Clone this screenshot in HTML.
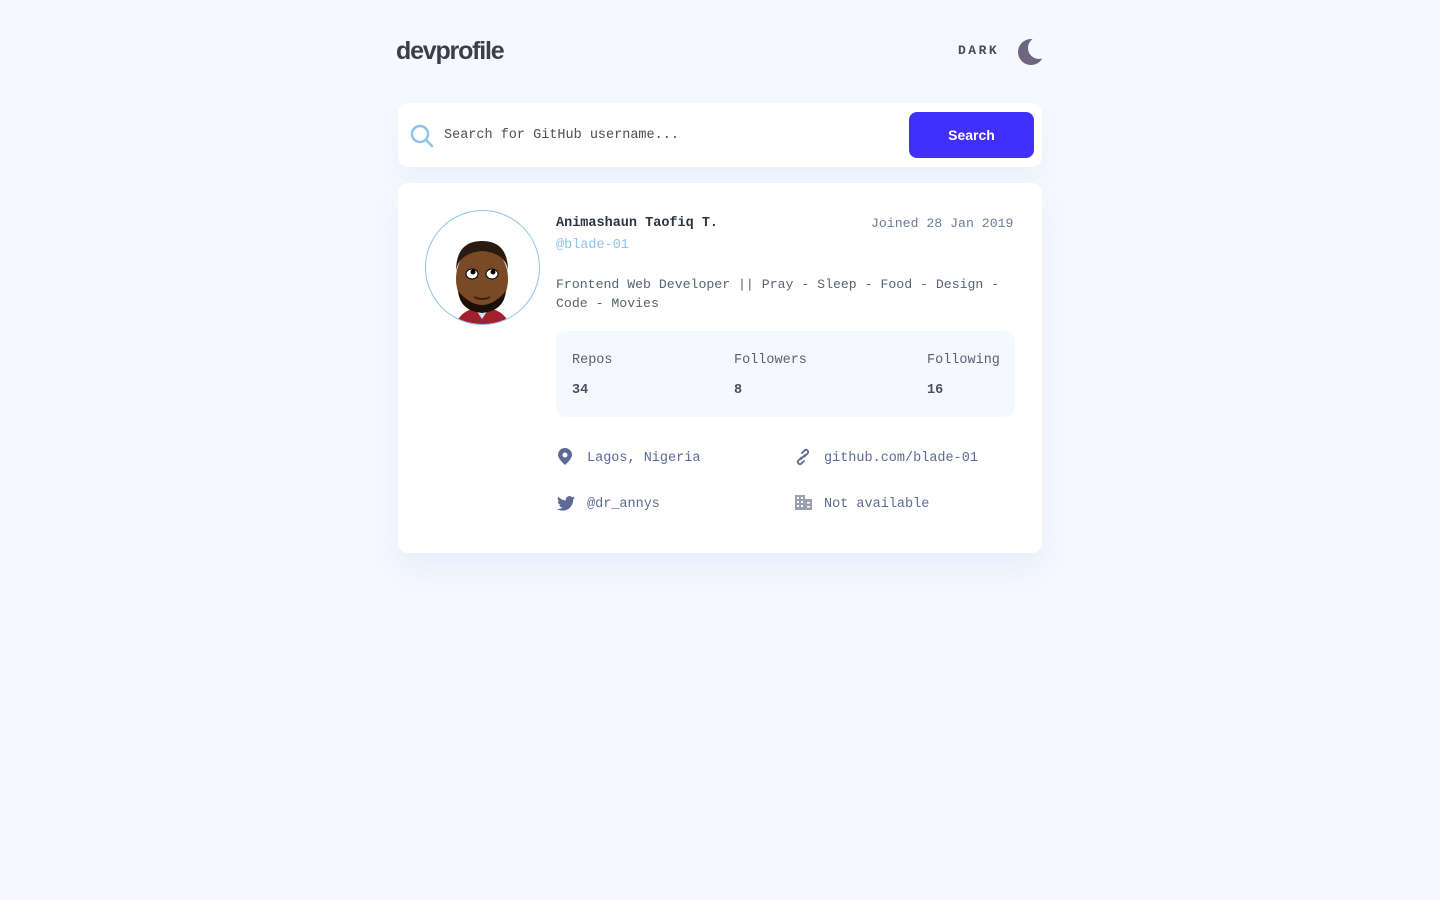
<!DOCTYPE html>
<html><head><style>
body{margin:0;background:#f5f8ff;font-family:"Liberation Mono",monospace;color:#4b6a9b;}
.abs{position:absolute}
.mono{font-family:"Liberation Mono",monospace;font-size:13.5px;}
</style></head><body>
<div class="abs" style="left:396px;top:37px;font-family:'Liberation Sans',sans-serif;font-weight:bold;font-size:25px;color:#3a3f4a;letter-spacing:-1.2px">devprofile</div>
<div class="abs" style="left:958px;top:43px;font-family:'Liberation Mono',monospace;font-weight:bold;font-size:13px;letter-spacing:2.5px;color:#4a4a55">DARK</div>
<svg class="abs" style="left:1016px;top:37px" width="30" height="30" viewBox="0 0 30 30"><circle cx="15" cy="15" r="13" fill="#6e6580"/><circle cx="23" cy="11" r="11" fill="#f5f8ff"/></svg>

<div class="abs" style="left:398px;top:103px;width:644px;height:64px;background:#fff;border-radius:10px;box-shadow:0 12px 24px rgba(70,96,187,0.05)"></div>
<svg class="abs" style="left:409px;top:123px" width="26" height="26" viewBox="0 0 26 26"><circle cx="11" cy="11" r="8" fill="none" stroke="#8fc4e8" stroke-width="2.5"/><line x1="17" y1="17" x2="23" y2="23" stroke="#8fc4e8" stroke-width="2.5" stroke-linecap="round"/></svg>
<div class="abs mono" style="left:444px;top:128px;color:#4b4f5a">Search for GitHub username...</div>
<div class="abs" style="left:909px;top:112px;width:125px;height:46px;background:#4130fc;border-radius:8px;color:#fff;font-family:'Liberation Sans',sans-serif;font-weight:bold;font-size:14px;line-height:46px;text-align:center">Search</div>

<div class="abs" style="left:398px;top:183px;width:644px;height:370px;background:#fff;border-radius:10px;box-shadow:0 16px 30px rgba(70,96,187,0.07)"></div>
<div class="abs" style="left:425px;top:210px;width:113px;height:113px;border:1.5px solid #8fc4e8;border-radius:50%;overflow:hidden;background:#fff">
<svg width="113" height="113" viewBox="0 0 113 113"><path d="M30 113 Q35 98 56 96 Q78 98 83 113Z" fill="#a0202e"/><path d="M48 96 L56 108 L64 96Z" fill="#cfe0ef"/><ellipse cx="56" cy="68" rx="26" ry="33" fill="#7a4a26"/><path d="M30 60 Q30 30 56 30 Q82 30 82 60 Q80 42 56 40 Q33 42 30 60Z" fill="#2a1a10"/><ellipse cx="46" cy="63" rx="6" ry="5" fill="#fff" stroke="#000"/><ellipse cx="66" cy="63" rx="6" ry="5" fill="#fff" stroke="#000"/><circle cx="47" cy="61" r="2.5"/><circle cx="67" cy="61" r="2.5"/><path d="M48 86 Q56 90 64 86" stroke="#3a2010" fill="none" stroke-width="2"/><path d="M32 80 Q56 108 80 80 Q78 100 56 102 Q34 100 32 80Z" fill="#1a1008"/></svg></div>
<div class="abs mono" style="left:556px;top:216px;font-weight:bold;color:#2b3442">Animashaun Taofiq T.</div>
<div class="abs mono" style="left:871px;top:216px;color:#697c9a;font-size:13.2px">Joined 28 Jan 2019</div>
<div class="abs mono" style="left:556px;top:238px;color:#8fc4e8">@blade-01</div>
<div class="abs mono" style="left:556px;top:275px;width:460px;line-height:19px;color:#5a6170;font-size:13.2px">Frontend Web Developer || Pray - Sleep - Food - Design - Code - Movies</div>

<div class="abs" style="left:556px;top:331px;width:459px;height:86px;background:#f5f8ff;border-radius:10px"></div>
<div class="abs mono" style="left:572px;top:353px;color:#5a6170">Repos</div>
<div class="abs mono" style="left:734px;top:353px;color:#5a6170">Followers</div>
<div class="abs mono" style="left:927px;top:353px;color:#5a6170">Following</div>
<div class="abs mono" style="left:572px;top:383px;font-weight:bold;color:#4a5060">34</div>
<div class="abs mono" style="left:734px;top:383px;font-weight:bold;color:#4a5060">8</div>
<div class="abs mono" style="left:927px;top:383px;font-weight:bold;color:#4a5060">16</div>

<svg class="abs" style="left:558px;top:448px" width="16" height="18" viewBox="0 0 16 18"><path d="M7 0 A7 7 0 0 1 14 7 C14 11 7 17 7 17 C7 17 0 11 0 7 A7 7 0 0 1 7 0Z" fill="#5f6a94"/><circle cx="7" cy="7" r="2.5" fill="#fff"/></svg>
<div class="abs mono" style="left:587px;top:451px;color:#5f6a94">Lagos, Nigeria</div>
<svg class="abs" style="left:794px;top:448px" width="18" height="18" viewBox="0 0 18 18"><g fill="none" stroke="#5f6a94" stroke-width="1.8" stroke-linecap="round"><path d="M7.5 9.5 L4.5 12.5 Q3 14 4.5 15.5 Q6 17 7.5 15.5 L10 13"/><path d="M10.5 8.5 L13.5 5.5 Q15 4 13.5 2.5 Q12 1 10.5 2.5 L8 5"/><path d="M7 11 L11 7"/></g></svg>
<div class="abs mono" style="left:824px;top:451px;color:#5f6a94">github.com/blade-01</div>
<svg class="abs" style="left:557px;top:496px" width="18" height="15" viewBox="0 0 24 20"><path d="M24 2.4a9.8 9.8 0 0 1-2.8.8A4.9 4.9 0 0 0 23.3.5a9.9 9.9 0 0 1-3.1 1.2A4.9 4.9 0 0 0 11.8 6 14 14 0 0 1 1.7.9a4.9 4.9 0 0 0 1.5 6.6A4.9 4.9 0 0 1 1 6.9a4.9 4.9 0 0 0 3.9 4.9 4.9 4.9 0 0 1-2.2.1 4.9 4.9 0 0 0 4.6 3.4A9.9 9.9 0 0 1 0 17.3 14 14 0 0 0 7.5 19.5c9 0 14-7.5 14-14v-.6A10 10 0 0 0 24 2.4z" fill="#5f6a94"/></svg>
<div class="abs mono" style="left:587px;top:497px;color:#5f6a94">@dr_annys</div>
<svg class="abs" style="left:795px;top:495px" width="17" height="15" viewBox="0 0 17 15"><rect x="0" y="0" width="10" height="15" fill="#9aa0b0"/><rect x="10" y="4" width="7" height="11" fill="#9aa0b0"/><g fill="#fff"><rect x="2" y="2" width="2" height="2"/><rect x="6" y="2" width="2" height="2"/><rect x="2" y="6" width="2" height="2"/><rect x="6" y="6" width="2" height="2"/><rect x="2" y="10" width="2" height="2"/><rect x="6" y="10" width="2" height="2"/><rect x="12" y="7" width="3" height="1.5"/><rect x="12" y="11" width="3" height="1.5"/></g></svg>
<div class="abs mono" style="left:824px;top:497px;color:#5f6a94">Not available</div>
</body></html>
